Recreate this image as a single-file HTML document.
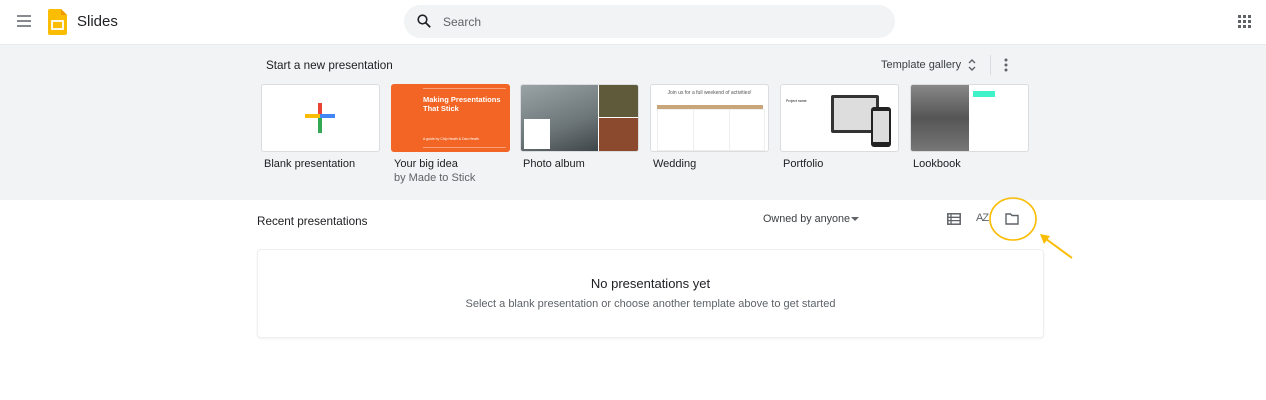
<!DOCTYPE html>
<html><head><style>
body{margin:0;width:1266px;height:400px;background:#fff;font-family:"Liberation Sans",Arial,sans-serif;position:relative;overflow:hidden;color:#202124}
.a{position:absolute}
.card{position:absolute;top:84px;width:117px;height:66px;background:#fff;border:1px solid #dadce0;border-radius:3px;overflow:hidden}
.lbl{position:absolute;top:158px;font-size:11px;color:#202124}
.sub{position:absolute;top:172px;font-size:11px;color:#5f6368}
</style></head><body>
<div class="a" style="left:0;top:0;width:1266px;height:44px;border-bottom:1px solid #e8eaed"></div>
<svg class="a" style="left:17px;top:15px" width="14" height="12"><path d="M0 1h14M0 6h14M0 11h14" stroke="#5f6368" stroke-width="1.6"/></svg>
<svg class="a" style="left:48px;top:9px" width="19" height="26"><path d="M2 0h11l6 6v18a2 2 0 0 1-2 2H2a2 2 0 0 1-2-2V2a2 2 0 0 1 2-2z" fill="#fbbc04"/><path d="M13 0v6h6z" fill="#f29900"/><rect x="4" y="12" width="11" height="8" fill="none" stroke="#fff" stroke-width="1.8"/></svg>
<div class="a" style="left:77px;top:13px;font-size:15px;color:#202124">Slides</div>
<div class="a" style="left:404px;top:5px;width:491px;height:33px;background:#f1f3f4;border-radius:17px"></div>
<svg class="a" style="left:417px;top:14px" width="14" height="14"><circle cx="5.5" cy="5.5" r="4.3" fill="none" stroke="#202124" stroke-width="1.6"/><path d="M8.7 8.7l4.5 4.5" stroke="#202124" stroke-width="1.8"/></svg>
<div class="a" style="left:443px;top:15px;font-size:12px;color:#5f6368">Search</div>
<svg class="a" style="left:1238px;top:15px" width="13" height="13" fill="#5f6368"><rect x="0" y="0" width="3" height="3"/><rect x="5" y="0" width="3" height="3"/><rect x="10" y="0" width="3" height="3"/><rect x="0" y="5" width="3" height="3"/><rect x="5" y="5" width="3" height="3"/><rect x="10" y="5" width="3" height="3"/><rect x="0" y="10" width="3" height="3"/><rect x="5" y="10" width="3" height="3"/><rect x="10" y="10" width="3" height="3"/></svg>

<div class="a" style="left:0;top:45px;width:1266px;height:155px;background:#f1f3f4"></div>
<div class="a" style="left:266px;top:59px;font-size:11.7px">Start a new presentation</div>
<div class="a" style="left:881px;top:59px;font-size:11px;color:#3c4043">Template gallery</div>
<svg class="a" style="left:967px;top:58px" width="10" height="14"><path d="M2 5l3-3 3 3M2 9l3 3 3-3" fill="none" stroke="#5f6368" stroke-width="1.4"/></svg>
<div class="a" style="left:990px;top:55px;width:1px;height:20px;background:#dadce0"></div>
<svg class="a" style="left:1004px;top:58px" width="4" height="14" fill="#5f6368"><circle cx="2" cy="2" r="1.5"/><circle cx="2" cy="7" r="1.5"/><circle cx="2" cy="12" r="1.5"/></svg>

<div class="card" style="left:261px"><svg style="position:absolute;left:43px;top:18px" width="30" height="30"><rect x="13" y="0" width="4" height="15" fill="#ea4335"/><rect x="15" y="11" width="15" height="4" fill="#4285f4"/><rect x="13" y="15" width="4" height="15" fill="#34a853"/><rect x="0" y="11" width="15" height="4" fill="#fbbc04"/></svg></div>
<div class="card" style="left:391px;background:#f26524;border-color:#f26524"><div style="position:absolute;left:31px;top:10px;font-size:7.5px;font-weight:bold;color:#fff;line-height:9px;width:85px">Making Presentations That Stick</div><div style="position:absolute;left:31px;top:3px;width:83px;height:1px;background:#f8a27a"></div><div style="position:absolute;left:31px;top:62px;width:83px;height:1px;background:#f8a27a"></div><div style="position:absolute;left:31px;top:52px;font-size:3.5px;color:#fff">A guide by Chip Heath &amp; Dan Heath</div></div>
<div class="card" style="left:520px"><div style="position:absolute;left:0;top:0;width:77px;height:66px;background:linear-gradient(160deg,#9aa4a6,#6c7578 60%,#3f4649)"></div><div style="position:absolute;left:78px;top:0;width:39px;height:32px;background:#5e5a3a"></div><div style="position:absolute;left:78px;top:33px;width:39px;height:33px;background:#8b4a2e"></div><div style="position:absolute;left:3px;top:34px;width:26px;height:30px;background:#fff"></div></div>
<div class="card" style="left:650px"><div style="position:absolute;left:0;top:5px;width:117px;text-align:center;font-size:5px;color:#555">Join us for a full weekend of activities!</div><div style="position:absolute;left:6px;top:20px;width:106px;height:4px;background:#c9a67a"></div><div style="position:absolute;left:6px;top:24px;width:35px;height:40px;border:1px solid #eee"></div><div style="position:absolute;left:42px;top:24px;width:35px;height:40px;border:1px solid #eee"></div><div style="position:absolute;left:78px;top:24px;width:34px;height:40px;border:1px solid #eee"></div></div>
<div class="card" style="left:780px"><div style="position:absolute;left:50px;top:10px;width:48px;height:38px;background:#333;border-radius:2px"></div><div style="position:absolute;left:53px;top:13px;width:42px;height:32px;background:#ddd"></div><div style="position:absolute;left:90px;top:22px;width:20px;height:40px;background:#222;border-radius:3px"></div><div style="position:absolute;left:92px;top:26px;width:16px;height:31px;background:#ddd"></div><div style="position:absolute;left:5px;top:14px;font-size:3.5px">Project name</div></div>
<div class="card" style="left:910px"><div style="position:absolute;left:0;top:0;width:58px;height:66px;background:linear-gradient(180deg,#888,#555 50%,#777)"></div><div style="position:absolute;left:62px;top:6px;width:22px;height:6px;background:#3ff2c8"></div></div>
<div class="lbl" style="left:264px">Blank presentation</div>
<div class="lbl" style="left:394px">Your big idea</div><div class="sub" style="left:394px">by Made to Stick</div>
<div class="lbl" style="left:523px">Photo album</div>
<div class="lbl" style="left:653px">Wedding</div>
<div class="lbl" style="left:783px">Portfolio</div>
<div class="lbl" style="left:913px">Lookbook</div>

<div class="a" style="left:257px;top:215px;font-size:11.7px">Recent presentations</div>
<div class="a" style="left:763px;top:213px;font-size:10.8px;color:#3c4043">Owned by anyone</div>
<svg class="a" style="left:851px;top:217px" width="8" height="5"><path d="M0 0h8L4 4z" fill="#5f6368"/></svg>
<svg class="a" style="left:947px;top:213px" width="14" height="12"><rect x="0.8" y="0.8" width="12.4" height="10.4" fill="none" stroke="#5f6368" stroke-width="1.5"/><path d="M4 1v10M1 4.3h12M1 7.6h12" stroke="#5f6368" stroke-width="1.3"/></svg>
<div class="a" style="left:976px;top:212px;font-size:11px;color:#5f6368;letter-spacing:-1px">AZ</div>
<svg class="a" style="left:1005px;top:213px" width="14" height="12"><path d="M1 1h4.5l1.5 1.5H13V11H1z" fill="none" stroke="#5f6368" stroke-width="1.4"/></svg>
<svg class="a" style="left:985px;top:190px" width="100" height="75"><ellipse cx="28" cy="29" rx="23" ry="21" fill="none" stroke="#fbbc04" stroke-width="1.6"/><path d="M87 68L57 46" stroke="#fbbc04" stroke-width="2"/><path d="M55 44l4 10 6-8z" fill="#fbbc04"/></svg>

<div class="a" style="left:257px;top:249px;width:785px;height:87px;border:1px solid #eeeff1;border-radius:4px;box-shadow:0 1px 2px rgba(0,0,0,0.06)"></div>
<div class="a" style="left:257px;top:276px;width:787px;text-align:center;font-size:13px;color:#202124">No presentations yet</div>
<div class="a" style="left:257px;top:298px;width:787px;text-align:center;font-size:11px;color:#5f6368">Select a blank presentation or choose another template above to get started</div>
</body></html>
